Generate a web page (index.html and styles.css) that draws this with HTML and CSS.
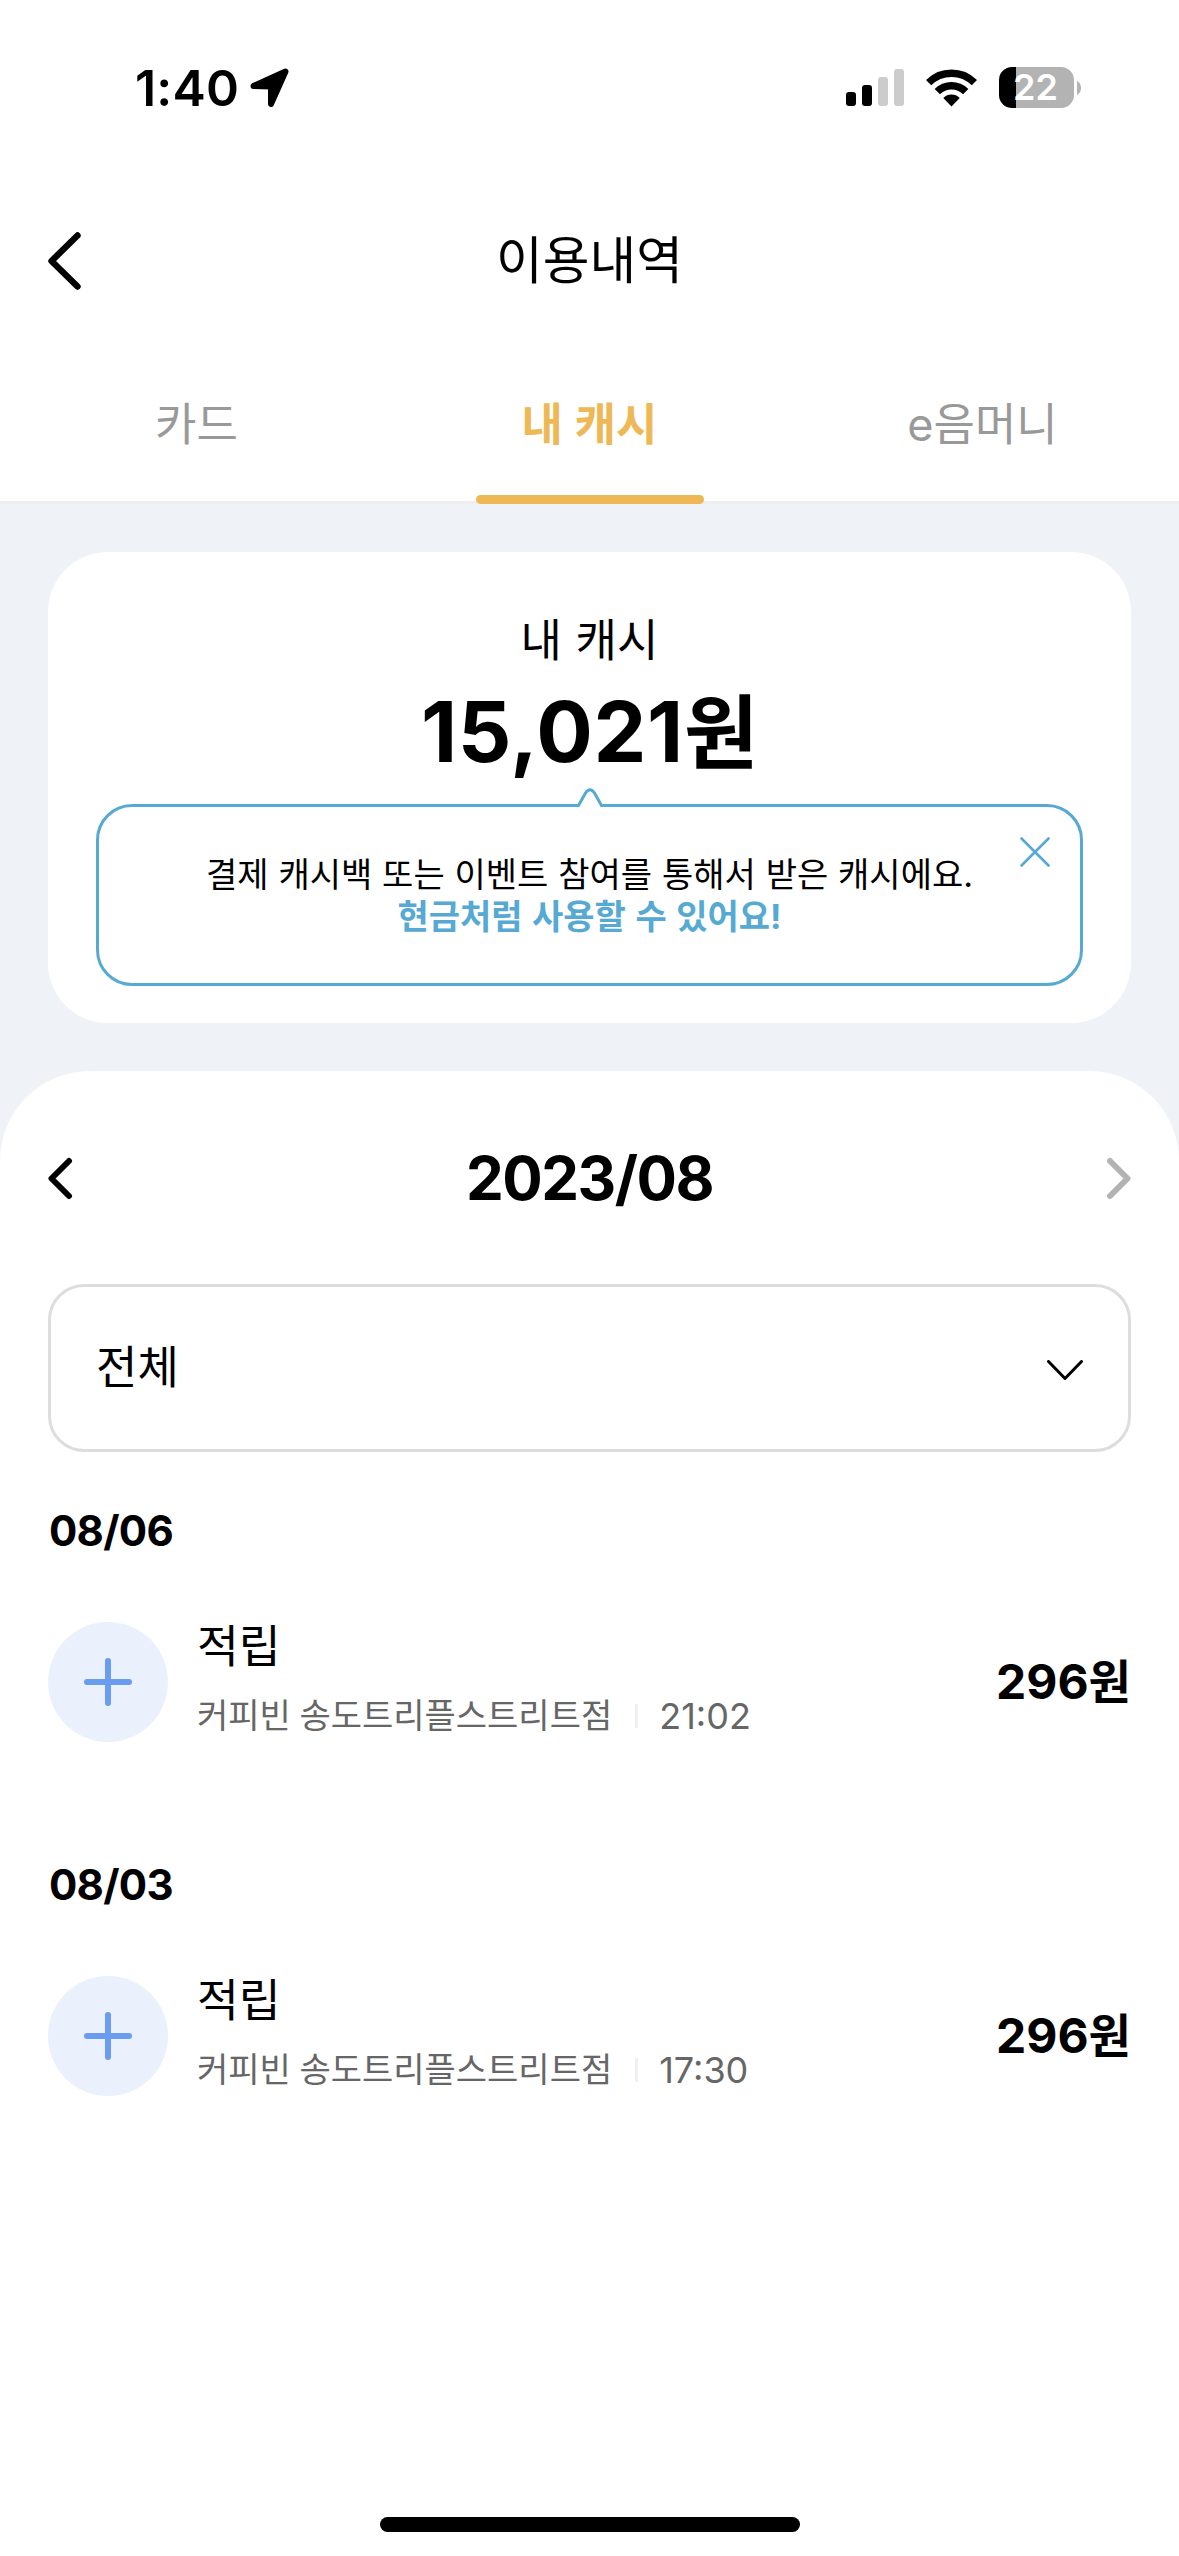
FILE: index.html
```html
<!DOCTYPE html>
<html lang="ko">
<head>
<meta charset="utf-8">
<meta name="viewport" content="width=device-width">
<title>이용내역</title>
<link rel="stylesheet" href="styles.css">
</head>
<body>
<div class="screen">
  <header class="status">
    <div class="status-left">
      <span class="clock">1:40</span>
      <svg class="location" width="40" height="40" viewBox="0 0 40 40"><path d="M3.500 18 L35.500 3.500 L21 36 V18.500 Z" fill="#000" stroke="#000" stroke-width="6" stroke-linejoin="round"/></svg>
    </div>
    <div class="status-right">
      <svg class="signal" width="58" height="38" viewBox="0 0 58 38"><rect x="0" y="23" width="10" height="14" rx="3"/><rect x="16" y="16" width="10" height="21" rx="3"/><rect x="32" y="8" width="10" height="29" rx="3" fill="#ccc"/><rect x="48" y="0" width="10" height="37" rx="3" fill="#ccc"/></svg>
      <svg class="wifi" width="51" height="38" viewBox="0 0 51 38"><g fill="none" stroke="#000" stroke-width="7.500"><path d="M2.600 13.600 A32.500 32.500 0 0 1 48.400 13.600"/><path d="M11.300 22.700 A20.200 20.200 0 0 1 39.700 22.700"/></g><path d="M17.300 29 A11.600 11.600 0 0 1 33.700 29 L25.500 37.500 Z"/></svg>
      <div class="battery"><div class="battery-body"><span>22</span></div><svg width="4" height="14" viewBox="0 0 4 14"><path d="M0 0 Q4 2 4 7 T0 14 Z" fill="#b3b3b3"/></svg></div>
    </div>
  </header>

  <nav class="topbar">
    <svg class="back" width="33" height="58" viewBox="0 0 33 58"><path d="M29.500 3.500 L3.500 29 L29.500 54.500" fill="none" stroke="#000" stroke-width="6.400" stroke-linecap="round" stroke-linejoin="round"/></svg>
    <h1>이용내역</h1>
  </nav>

  <div class="tabs">
    <div class="tab">카드</div>
    <div class="tab active">내 캐시</div>
    <div class="tab">e음머니</div>
  </div>

  <main class="content">
    <section class="card">
      <h2>내 캐시</h2>
      <p class="total">15,021<span class="won">원</span></p>
      <div class="tip">
        <svg class="notch" width="28" height="20" viewBox="0 0 28 20"><path d="M2.500 15.500 H25.500 V20 H2.500 Z" fill="#fff"/><path d="M0 17.500 H2.500 L9.500 5 Q14 -1.500 18.500 5 L25.500 17.500 H28" fill="none" stroke="#56a9d2" stroke-width="3"/></svg>
        <p>결제 캐시백 또는 이벤트 참여를 통해서 받은 캐시에요.</p>
        <p class="strong">현금처럼 사용할 수 있어요!</p>
        <svg class="close" width="30" height="30" viewBox="0 0 30 30"><path d="M1.500 1.500 L28.500 28.500 M28.500 1.500 L1.500 28.500" stroke="#56a9d2" stroke-width="2.600" stroke-linecap="round"/></svg>
      </div>
    </section>

    <section class="sheet">
      <div class="month">
        <svg width="25" height="43" viewBox="0 0 25 43"><path d="M21 4 L3.500 21.500 L21 39" fill="none" stroke="#000" stroke-width="6" stroke-linecap="round" stroke-linejoin="round"/></svg>
        <span>2023/08</span>
        <svg width="25" height="43" viewBox="0 0 25 43"><path d="M4 4 L21.500 21.500 L4 39" fill="none" stroke="#b3b3b3" stroke-width="6" stroke-linecap="round" stroke-linejoin="round"/></svg>
      </div>
      <div class="select">
        <span>전체</span>
        <svg width="36" height="21" viewBox="0 0 36 21"><path d="M1.500 1.500 L18 18.500 L34.500 1.500" fill="none" stroke="#000" stroke-width="3" stroke-linecap="round" stroke-linejoin="round"/></svg>
      </div>

      <div class="group">
        <h3>08/06</h3>
        <div class="entry">
          <div class="badge"><svg width="48" height="48" viewBox="0 0 48 48"><path d="M24 3 V45 M3 24 H45" stroke="#6a9cf0" stroke-width="6" stroke-linecap="round"/></svg></div>
          <div class="info">
            <div class="kind">적립</div>
            <div class="meta"><span class="shop">커피빈 송도트리플스트리트점</span><i></i><span class="time">21:02</span></div>
          </div>
          <div class="amount">296<span class="won">원</span></div>
        </div>
      </div>

      <div class="group">
        <h3>08/03</h3>
        <div class="entry">
          <div class="badge"><svg width="48" height="48" viewBox="0 0 48 48"><path d="M24 3 V45 M3 24 H45" stroke="#6a9cf0" stroke-width="6" stroke-linecap="round"/></svg></div>
          <div class="info">
            <div class="kind">적립</div>
            <div class="meta"><span class="shop">커피빈 송도트리플스트리트점</span><i></i><span class="time">17:30</span></div>
          </div>
          <div class="amount">296<span class="won">원</span></div>
        </div>
      </div>
      <div class="home"></div>
    </section>
  </main>
</div>
</body>
</html>
```
FILE: styles.css
```css
* { box-sizing: border-box; margin: 0; padding: 0; }
body {
  font-family: Inter, "Noto Sans CJK KR", sans-serif;
  color: #000;
  background: #fff;
}
svg { display: block; flex: none; }
h1, h2 { font-weight: 400; }
.screen { width: 1179px; height: 2556px; display: flex; flex-direction: column; overflow: hidden; }

.status { height: 177px; display: flex; justify-content: space-between; padding: 58px 98px 0 135px; }
.status-left, .status-right { display: flex; align-items: center; height: 60px; }
.clock { font-size: 50px; font-weight: 600; line-height: 60px; width: 115px; letter-spacing: 0.2px; }
.status-right { align-items: flex-start; padding-top: 9px; }
.signal { margin: 2px 22px 0 0; }
.wifi { margin: 2px 22px 0 0; }
.battery { display: flex; align-items: center; gap: 3px; }
.battery-body {
  width: 75px; height: 41px; border-radius: 13px; padding-right: 2px;
  background: linear-gradient(to right, #000 17px, #b3b3b3 17px);
  color: #fff; font-size: 36px; font-weight: 600; line-height: 41px; text-align: center;
}

.topbar { height: 168px; padding: 0 48px; display: grid; grid-template-columns: 33px 1fr 33px; align-items: center; }
.topbar h1 { font-size: 50.800px; line-height: 70px; text-align: center; }

.tabs { height: 159px; flex: none; display: grid; grid-template-columns: repeat(3, 1fr); justify-items: center; border-bottom: 3px solid #eee; }
.tab { position: relative; width: 228px; padding-top: 4px; font-size: 45px; line-height: 152px; color: #999; text-align: center; word-spacing: 1px; white-space: nowrap; }
.tab.active { color: #efb856; font-weight: 700; }
.tab.active::after { content: ""; position: absolute; left: 0; right: 0; bottom: -3px; height: 9px; border-radius: 5px; background: #efb856; }

.content { flex: 1; background: #eff3f8; display: flex; flex-direction: column; }
.card { margin: 48px; height: 471px; flex: none; background: #fff; border-radius: 60px; padding: 59px 48px 37px; text-align: center; }
.card h2 { font-size: 45px; line-height: 60px; word-spacing: 1px; }
.total { height: 100px; margin: 11px 0 22px; font-size: 84px; line-height: 100px; font-weight: 700; letter-spacing: 0.600px; }
.won { font-size: 0.960em; letter-spacing: 0; line-height: 1; }

.tip { position: relative; height: 182px; border: 3px solid #56a9d2; border-radius: 36px; padding-top: 47px; font-size: 34px; line-height: 42px; word-spacing: 0.300px; white-space: nowrap; }
.tip .strong { color: #56a9d2; font-weight: 700; word-spacing: 1.500px; }
.notch { position: absolute; left: 477px; top: -19px; }
.close { position: absolute; right: 30px; top: 30px; }

.sheet { flex: 1; background: #fff; border-radius: 90px 90px 0 0; padding: 48px 48px 0; display: flex; flex-direction: column; }
.month { height: 118px; display: flex; align-items: center; justify-content: space-between; font-size: 60px; font-weight: 700; letter-spacing: -1.500px; }
.select { margin-top: 47px; height: 168px; border: 3px solid #ddd; border-radius: 36px; padding: 0 45px; display: flex; align-items: center; justify-content: space-between; font-size: 45px; line-height: 60px; }
.select svg { margin-top: 4px; }

.group { padding-top: 49px; }
.group + .group { padding-top: 108px; }
.group h3 { font-size: 42px; line-height: 60px; font-weight: 700; letter-spacing: -0.700px; padding-left: 1px; }
.entry { margin-top: 56px; height: 130px; display: flex; align-items: center; }
.badge { width: 120px; height: 120px; border-radius: 50%; background: #eaf1fc; display: grid; place-items: center; }
.info { flex: 1; height: 130px; margin-left: 29px; }
.kind { font-size: 45.500px; line-height: 60px; }
.meta { margin-top: 19px; display: flex; align-items: center; font-size: 34px; line-height: 40px; color: #666; word-spacing: -1px; }
.meta i { width: 3px; height: 24px; margin: 0 21px 0 23px; background: #f0f0f0; }
.time { font-size: 36px; }
.amount { font-size: 48px; line-height: 60px; font-weight: 700; }

.home { width: 420px; height: 15px; margin: auto auto 24px; border-radius: 8px; background: #000; }
```
